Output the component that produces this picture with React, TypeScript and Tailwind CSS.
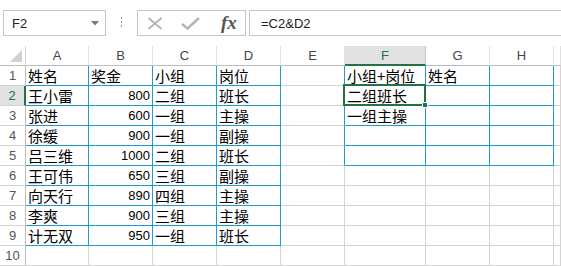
import React from "react";

const data: string[][] = [
  ["姓名", "奖金", "小组", "岗位", "", "小组+岗位", "姓名", "", ""],
  ["王小雷", "800", "二组", "班长", "", "二组班长", "", "", ""],
  ["张进", "600", "一组", "主操", "", "一组主操", "", "", ""],
  ["徐缓", "900", "一组", "副操", "", "", "", "", ""],
  ["吕三维", "1000", "二组", "班长", "", "", "", "", ""],
  ["王可伟", "650", "三组", "副操", "", "", "", "", ""],
  ["向天行", "890", "四组", "主操", "", "", "", "", ""],
  ["李爽", "900", "三组", "主操", "", "", "", "", ""],
  ["计无双", "950", "一组", "班长", "", "", "", "", ""],
  ["", "", "", "", "", "", "", "", ""],
];

const cols = ["A", "B", "C", "D", "E", "F", "G", "H", ""];
const widths = ["w-[63px]", "w-[64px]", "w-[64px]", "w-[64px]", "w-[64px]", "w-[81px]", "w-[64px]", "w-[64px]", "flex-1"];

function inBlue(r: number, c: number) {
  if (r >= 0 && r <= 8 && c >= 0 && c <= 3) return true;
  if (r >= 0 && r <= 4 && c >= 5 && c <= 7) return true;
  return false;
}

const cn = '"Noto Sans CJK SC", "Liberation Sans", sans-serif';

export default function App() {
  return (
    <div className="w-[561px] h-[266px] bg-white overflow-hidden flex flex-col" style={{ fontFamily: cn }}>
      {/* formula bar */}
      <div className="h-[46px] flex items-start pt-[10px] pl-[3px] shrink-0">
        <div className="w-[103px] h-[26px] border border-[#c6c6c6] flex items-center pl-[8px] pr-[6px] justify-between">
          <span className="text-[13px] text-[#222] leading-none" style={{ fontFamily: '"Liberation Sans", sans-serif' }}>F2</span>
          <svg width="8" height="5" viewBox="0 0 8 5"><path d="M0 0 L8 0 L4 4.5 Z" fill="#7a7a7a" /></svg>
        </div>
        <div className="w-[31px] h-[26px] flex items-center justify-center">
          <svg width="3" height="12" viewBox="0 0 3 12">
            <rect x="1" y="0" width="1" height="2" fill="#9a9a9a" />
            <rect x="1" y="4" width="1" height="2" fill="#9a9a9a" />
            <rect x="1" y="8" width="1" height="2" fill="#9a9a9a" />
          </svg>
        </div>
        <div className="w-[109px] h-[26px] border border-[#c6c6c6] flex items-center relative">
          <svg className="ml-[9px]" width="16" height="13" viewBox="0 0 16 13">
            <path d="M1.5 1 L14.5 12 M14.5 1 L1.5 12" stroke="#b4b4b4" strokeWidth="1.8" fill="none" />
          </svg>
          <svg className="ml-[18px]" width="19" height="13" viewBox="0 0 19 13">
            <path d="M1 7 L6.5 11.5 L18 1" stroke="#b4b4b4" strokeWidth="2.4" fill="none" />
          </svg>
          <span
            className="ml-[21px] text-[19px] italic font-bold text-[#555] leading-none -mt-[2px]"
            style={{ fontFamily: '"Liberation Serif", serif' }}
          >
            fx
          </span>
        </div>
        <div className="ml-[3px] flex-1 h-[26px] border-t border-b border-l border-[#c6c6c6] flex items-center pl-[11px]">
          <span className="text-[13px] text-[#222] leading-none" style={{ fontFamily: '"Liberation Sans", sans-serif' }}>=C2&amp;D2</span>
        </div>
      </div>

      {/* column headers */}
      <div className="flex h-[20px] shrink-0">
        <div className="w-[26px] h-[20px] border-r border-b border-r-[#d4d4d4] border-b-[#bdbdbd] flex items-end justify-end pr-[3px] pb-[3px]">
          <svg width="12" height="12" viewBox="0 0 12 12"><path d="M12 0 L12 12 L0 12 Z" fill="#d0d0d0" /></svg>
        </div>
        {cols.map((c, i) => {
          const sel = i === 5;
          return (
            <div
              key={i}
              className={
                widths[i] +
                " h-[20px] flex items-center justify-center text-[13px] leading-none " +
                (sel
                  ? "bg-[#e1e1e1] text-[#217346] border-b-2 border-b-[#217346] border-r border-r-[#c6c6c6]"
                  : "text-[#444] border-b border-b-[#bdbdbd] border-r border-r-[#e0e0e0]")
              }
              style={{ fontFamily: '"Liberation Sans", sans-serif' }}
            >
              {c}
            </div>
          );
        })}
      </div>

      {/* rows */}
      {data.map((row, r) => {
        const selRow = r === 1;
        return (
          <div key={r} className="flex h-[20px] shrink-0">
            <div
              className={
                "w-[26px] h-[20px] flex items-center justify-center text-[13px] leading-none border-b " +
                (selRow
                  ? "bg-[#e1e1e1] text-[#217346] border-r-2 border-r-[#217346] border-b-[#d4d4d4]"
                  : "text-[#555] border-r border-r-[#bdbdbd] border-b-[#d4d4d4]")
              }
              style={{ fontFamily: '"Liberation Sans", sans-serif' }}
            >
              {r + 1}
            </div>
            {row.map((v, c) => {
              const blueR = inBlue(r, c) || inBlue(r, c + 1);
              const blueB = inBlue(r, c) || inBlue(r + 1, c);
              const isNum = /^\d+$/.test(v);
              const sel = r === 1 && c === 5;
              return (
                <div
                  key={c}
                  className={
                    widths[c] +
                    " h-[20px] relative border-r border-b flex items-end pb-[1px] overflow-visible whitespace-nowrap " +
                    (blueR ? "border-r-[#1f9ad4] " : "border-r-[#d4d4d4] ") +
                    (blueB ? "border-b-[#1f9ad4] " : "border-b-[#d4d4d4] ") +
                    (isNum ? "justify-end pr-[2px]" : "justify-start pl-[2px]")
                  }
                >
                  {isNum ? (
                    <span className="text-[13px] leading-[16px] text-black" style={{ fontFamily: '"Liberation Sans", sans-serif' }}>
                      {v}
                    </span>
                  ) : (
                    <span className="text-[15px] leading-[17px] text-black">{v}</span>
                  )}
                  {sel && (
                    <div className="absolute left-[-2px] top-[-2px] right-[-1px] bottom-[-1px] border-2 border-[#217346] z-10">
                      <div className="absolute right-[-4px] bottom-[-4px] w-[6px] h-[6px] bg-[#217346] border border-white" />
                    </div>
                  )}
                </div>
              );
            })}
          </div>
        );
      })}
    </div>
  );
}
